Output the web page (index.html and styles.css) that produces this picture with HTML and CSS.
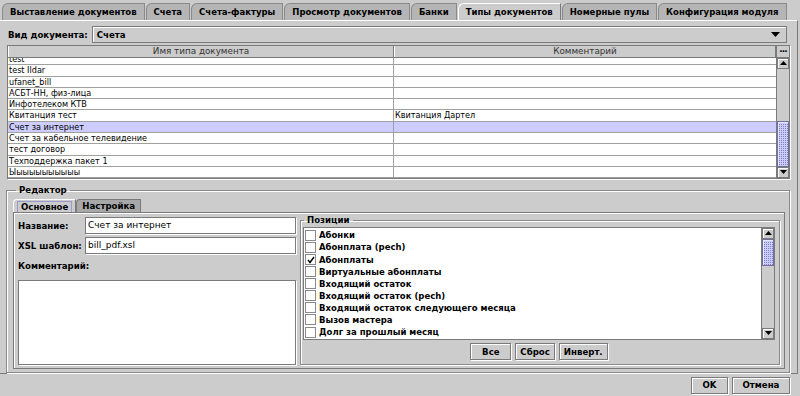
FILE: index.html
```html
<!DOCTYPE html>
<html lang="ru">
<head>
  <meta charset="UTF-8" />
  <title>Типы документов</title>
  <link rel="stylesheet" href="styles.css">
</head>
<body>
  <div class="window">
    <div class="tabs">
      <div class="tab">Выставление документов</div>
      <div class="tab">Счета</div>
      <div class="tab">Счета-фактуры</div>
      <div class="tab">Просмотр документов</div>
      <div class="tab">Банки</div>
      <div class="tab active">Типы документов</div>
      <div class="tab">Номерные пулы</div>
      <div class="tab">Конфигурация модуля</div>
    </div>

    <div class="pane">
      <div class="doc-row">
        <span class="lbl">Вид документа:</span>
        <div class="combo">
          <span>Счета</span>
          <svg class="combo-arrow" width="9" height="6" viewBox="0 0 9 6"><path d="M0 0h9L4.5 5z" fill="#000"/></svg>
        </div>
      </div>

      <div class="table-wrap">
        <div class="grid">
          <div class="thead">
            <div class="th name">Имя типа документа</div>
            <div class="th">Комментарий</div>
          </div>
          <div class="tbody">
            <div class="rows">
              <div class="tr"><div class="td name">test</div><div class="td"></div></div>
              <div class="tr"><div class="td name">test Ildar</div><div class="td"></div></div>
              <div class="tr"><div class="td name">ufanet_bill</div><div class="td"></div></div>
              <div class="tr"><div class="td name">АСБТ-НН, физ-лица</div><div class="td"></div></div>
              <div class="tr"><div class="td name">Инфотелеком КТВ</div><div class="td"></div></div>
              <div class="tr"><div class="td name">Квитанция тест</div><div class="td">Квитанция Дартел</div></div>
              <div class="tr selected"><div class="td name">Счет за интернет</div><div class="td"></div></div>
              <div class="tr"><div class="td name">Счет за кабельное телевидение</div><div class="td"></div></div>
              <div class="tr"><div class="td name">тест договор</div><div class="td"></div></div>
              <div class="tr"><div class="td name">Техподдержка пакет 1</div><div class="td"></div></div>
              <div class="tr"><div class="td name">Ыыыыыыыыыыы</div><div class="td"></div></div>
            </div>
          </div>
        </div>
        <div class="side">
          <div class="corner">...</div>
          <div class="vscroll">
            <div class="sb-btn"><svg width="7" height="5" viewBox="0 0 7 5"><path d="M3.5 0L7 4H0z" fill="#000"/></svg></div>
            <div class="track main-track"><div class="thumb"></div></div>
            <div class="sb-btn"><svg width="7" height="5" viewBox="0 0 7 5"><path d="M0 0h7L3.5 4z" fill="#000"/></svg></div>
          </div>
        </div>
      </div>

      <fieldset class="group editor">
        <legend>Редактор</legend>
        <div class="subtabs">
          <div class="subtab active"><span class="focus">Основное</span></div>
          <div class="subtab">Настройка</div>
        </div>
        <div class="subpane">
          <div class="left">
            <div class="field-row">
              <span class="lbl">Название:</span>
              <div class="input">Счет за интернет</div>
            </div>
            <div class="field-row">
              <span class="lbl">XSL шаблон:</span>
              <div class="input">bill_pdf.xsl</div>
            </div>
            <div class="lbl comment-lbl">Комментарий:</div>
            <div class="textarea"></div>
          </div>

          <fieldset class="group positions">
            <legend>Позиции</legend>
            <div class="list-wrap">
              <div class="list">
                <div class="item"><span class="box"></span>Абонки</div>
                <div class="item"><span class="box"></span>Абонплата (pech)</div>
                <div class="item"><span class="box"><svg width="8" height="8" viewBox="0 0 8 8"><path d="M1 4l2 2.5L7 1" stroke="#000" stroke-width="1.4" fill="none"/></svg></span>Абонплаты</div>
                <div class="item"><span class="box"></span>Виртуальные абонплаты</div>
                <div class="item"><span class="box"></span>Входящий остаток</div>
                <div class="item"><span class="box"></span>Входящий остаток (pech)</div>
                <div class="item"><span class="box"></span>Входящий остаток следующего месяца</div>
                <div class="item"><span class="box"></span>Вызов мастера</div>
                <div class="item"><span class="box"></span>Долг за прошлый месяц</div>
                <div class="item"><span class="box"></span>Зарезервировано</div>
              </div>
              <div class="vscroll">
                <div class="sb-btn"><svg width="7" height="5" viewBox="0 0 7 5"><path d="M3.5 0L7 4H0z" fill="#000"/></svg></div>
                <div class="track list-track"><div class="thumb"></div></div>
                <div class="sb-btn"><svg width="7" height="5" viewBox="0 0 7 5"><path d="M0 0h7L3.5 4z" fill="#000"/></svg></div>
              </div>
            </div>
            <div class="list-buttons">
              <button class="btn all">Все</button>
              <button class="btn">Сброс</button>
              <button class="btn">Инверт.</button>
            </div>
          </fieldset>
        </div>
      </fieldset>
    </div>

    <div class="footer">
      <button class="btn ok">OK</button>
      <button class="btn cancel">Отмена</button>
    </div>
  </div>
</body>
</html>
```
FILE: styles.css
```css
body {
  margin: 0;
  background: #cccccc;
  font-family: "DejaVu Sans", sans-serif;
  font-size: 9px;
  color: #000;
}

.window {
  width: 800px;
  height: 396px;
  display: flex;
  flex-direction: column;
  overflow: hidden;
}

.lbl {
  font-weight: bold;
  font-size: 8.6px;
  color: #000;
}

/* top tabs */
.tabs {
  display: flex;
  height: 17px;
  margin-top: 3px;
  padding-left: 2px;
  gap: 1px;
}

.tab {
  font-weight: bold;
  font-size: 8.5px;
  height: 16px;
  line-height: 17px;
  padding: 0 7px;
  background: #b5b5b5;
  border: 1px solid #8a8a8a;
  border-bottom: none;
  border-top-left-radius: 6px;
  white-space: nowrap;
}

.tab.active {
  background: #cccccc;
  border-color: #ffffff #7a7a7a #cccccc #ffffff;
  height: 17px;
}

/* main pane */
.pane {
  box-sizing: border-box;
  height: 354px;
  border-top: 1px solid #ffffff;
  border-right: 1px solid #7a7a7a;
  border-bottom: 1px solid #7a7a7a;
  margin-right: 2px;
  padding: 5px 7px 2px 6px;
  display: flex;
  flex-direction: column;
}

.doc-row {
  display: flex;
  align-items: center;
  gap: 4px;
  height: 17px;
  padding-left: 2px;
}

.combo {
  flex: 1;
  height: 15px;
  margin-right: 3px;
  border: 1px solid #7a7a7a;
  box-shadow: inset 1px 1px #ffffff;
  display: flex;
  align-items: center;
  justify-content: space-between;
  padding: 0 6px 0 4px;
  font-weight: bold;
  font-size: 8.6px;
}

/* document type table */
.table-wrap {
  margin-top: 2px;
  margin-left: 1px;
  height: 133px;
  border: 1px solid #7a7a7a;
  box-shadow: 1px 1px #ffffff;
  display: flex;
}

.grid {
  flex: 1;
  display: flex;
  flex-direction: column;
}

.thead {
  display: flex;
  height: 11px;
  border-bottom: 1px solid #7a7a7a;
  background: #cccccc;
}

.th {
  flex: 1;
  text-align: center;
  font-size: 8.8px;
  line-height: 11px;
  color: #333333;
  border-left: 1px solid #ffffff;
  border-right: 1px solid #7a7a7a;
}

.tbody {
  flex: 1;
  background: #ffffff;
  overflow: hidden;
}

.rows {
  margin-top: -4px;
}

.tr {
  display: flex;
  height: 10.3px;
  border-bottom: 1px solid #a0a0a0;
}

.tr.selected {
  background: #ccccff;
}

.td {
  flex: 1;
  font-size: 8.1px;
  line-height: 11px;
  padding-left: 1px;
  white-space: nowrap;
  overflow: hidden;
}

.td.name {
  border-right: 1px solid #a0a0a0;
}

.th.name, .td.name {
  flex: 0 0 384px;
}

.side {
  width: 12px;
  display: flex;
  flex-direction: column;
  border-left: 1px solid #7a7a7a;
}

.corner {
  height: 11px;
  border-bottom: 1px solid #7a7a7a;
  font-weight: bold;
  line-height: 6px;
  text-align: center;
  letter-spacing: -1px;
}

.vscroll {
  flex: 1;
  width: 12px;
  display: flex;
  flex-direction: column;
  background: #cccccc;
}

.sb-btn {
  box-sizing: border-box;
  height: 11px;
  border: 1px solid #7a7a7a;
  box-shadow: inset 1px 1px #ffffff;
  display: flex;
  align-items: center;
  justify-content: center;
}

.track {
  flex: 1;
  display: flex;
  flex-direction: column;
}

.thumb {
  background-color: #ccccff;
  background-image: conic-gradient(#8080b8 25%, transparent 0);
  background-size: 2px 2px;
  border: 1px solid #6f6fa0;
  box-shadow: inset 1px 1px #e6e6ff;
  box-sizing: border-box;
}

.main-track {
  padding-top: 52px;
}

.main-track .thumb {
  flex: 1;
}

.list-track .thumb {
  height: 27px;
}

/* editor group */
.group {
  border: 1px solid #8a8a8a;
  box-shadow: inset 1px 1px #ffffff, 1px 1px #ffffff;
  margin: 0;
  padding: 0;
}

.group legend {
  font-weight: bold;
  font-size: 8.6px;
  padding: 0 3px;
  margin-left: 3px;
}

.editor {
  margin-top: 6px;
  flex: 1;
  display: flex;
  flex-direction: column;
  padding: 0 4px 3px 6px;
}

.subtabs {
  display: flex;
  height: 13px;
  margin-top: 4px;
}

.subtab {
  font-weight: bold;
  font-size: 8.6px;
  padding: 0 5px;
  line-height: 13px;
  background: #a8a8a8;
  border: 1px solid #7a7a7a;
  border-bottom: none;
  border-top-left-radius: 4px;
}

.subtab.active {
  background: #cccccc;
  border-color: #ffffff #7a7a7a #cccccc #ffffff;
  padding: 1px 3px 0;
}

.subtab .focus {
  display: block;
  line-height: 10px;
  padding: 0 3px;
  border: 1px solid #9999cc;
}

.subpane {
  flex: 1;
  border: 1px solid #7a7a7a;
  box-shadow: inset 1px 1px #ffffff;
  display: flex;
  gap: 4px;
  padding: 4px 4px 3px 4px;
}

.left {
  width: 278px;
  display: flex;
  flex-direction: column;
}

.field-row {
  display: flex;
  align-items: center;
  height: 17px;
  margin-bottom: 3px;
}

.field-row .lbl {
  width: 67px;
}

.input {
  flex: 1;
  height: 15px;
  line-height: 15px;
  background: #ffffff;
  border: 1px solid #7a7a7a;
  box-shadow: 1px 1px #ffffff;
  padding-left: 2px;
}

.comment-lbl {
  margin-top: 4px;
  height: 19px;
}

.textarea {
  flex: 1;
  background: #ffffff;
  border: 1px solid #7a7a7a;
  box-shadow: 1px 1px #ffffff;
}

.positions {
  flex: 1;
  padding: 2px 4px 4px 2px;
  display: flex;
  flex-direction: column;
  margin-top: -2px;
}

.positions legend {
  margin-left: 1px;
}

.list-wrap {
  height: 111px;
  border: 1px solid #7a7a7a;
  background: #ffffff;
  display: flex;
}

.list {
  flex: 1;
  overflow: hidden;
  padding-top: 1px;
}

.item {
  display: flex;
  align-items: center;
  gap: 3px;
  height: 12.1px;
  font-weight: bold;
  font-size: 8.5px;
  padding-left: 1px;
  white-space: nowrap;
}

.box {
  width: 9px;
  height: 9px;
  border: 1px solid #8a8a8a;
  background: #ffffff;
  display: flex;
  align-items: center;
  justify-content: center;
}

.list-wrap .vscroll {
  flex: 0 0 12px;
  border-left: 1px solid #7a7a7a;
}

.list-buttons {
  display: flex;
  justify-content: center;
  gap: 4px;
  margin-top: 3px;
}

.btn {
  font-family: "DejaVu Sans", sans-serif;
  font-size: 8.6px;
  font-weight: bold;
  height: 17px;
  padding: 0 4px;
  background: #cccccc;
  border: 1px solid #7a7a7a;
  box-shadow: inset 1px 1px #ffffff, 1px 1px #ffffff;
  color: #000;
}

.btn.all {
  width: 41px;
}

.footer {
  flex: 1;
  display: flex;
  justify-content: flex-end;
  align-items: center;
  gap: 4px;
  padding-right: 10px;
}

.btn.ok {
  width: 37px;
}

.btn.cancel {
  width: 58px;
}
```
